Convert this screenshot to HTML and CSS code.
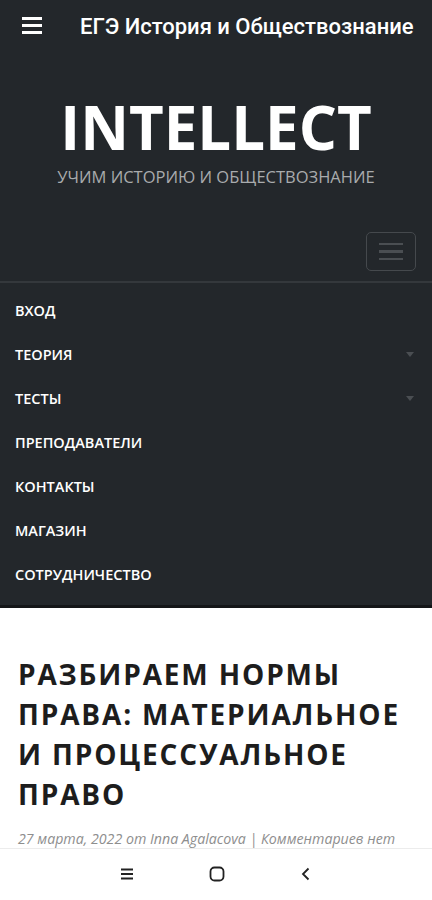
FILE: index.html
```html
<!DOCTYPE html>
<html lang="ru">
<head>
<meta charset="utf-8">
<title>ЕГЭ История и Обществознание</title>
<link rel="stylesheet" href="styles.css">
</head>
<body>
<div class="screen">
  <header class="appbar">
    <svg class="appbar-menu" width="24" height="24" viewBox="0 0 24 24"><path d="M2 4.5h20M2 11.5h20M2 18.5h20" stroke="#fff" stroke-width="3" fill="none"/></svg>
    <div class="appbar-title">ЕГЭ История и Обществознание</div>
  </header>
  <section class="site-header">
    <div class="brand">
      <div class="brand-name">INTELLECT</div>
      <div class="brand-tag">УЧИМ ИСТОРИЮ И ОБЩЕСТВОЗНАНИЕ</div>
    </div>
    <div class="toggle-row">
      <div class="toggle">
        <span class="bar"></span><span class="bar"></span><span class="bar"></span>
      </div>
    </div>
    <nav class="menu">
      <div class="menu-item">ВХОД</div>
      <div class="menu-item">ТЕОРИЯ<span class="caret"></span></div>
      <div class="menu-item">ТЕСТЫ<span class="caret"></span></div>
      <div class="menu-item">ПРЕПОДАВАТЕЛИ</div>
      <div class="menu-item">КОНТАКТЫ</div>
      <div class="menu-item">МАГАЗИН</div>
      <div class="menu-item">СОТРУДНИЧЕСТВО</div>
    </nav>
  </section>
  <main class="content">
    <h1 class="post-title">РАЗБИРАЕМ НОРМЫ ПРАВА: МАТЕРИАЛЬНОЕ И ПРОЦЕССУАЛЬНОЕ ПРАВО</h1>
    <div class="post-meta">27 марта, 2022 от Inna Agalacova | Комментариев нет</div>
  </main>
  <footer class="navbar">
    <svg width="14" height="14" viewBox="0 0 14 14"><path d="M1 2.5h12M1 7h12M1 11.5h12" stroke="#222" stroke-width="1.8" fill="none"/></svg>
    <svg width="16" height="16" viewBox="0 0 16 16"><rect x="1.5" y="1.5" width="13" height="13" rx="4" stroke="#222" stroke-width="1.8" fill="none"/></svg>
    <svg width="12" height="14" viewBox="0 0 12 14"><path d="M8.5 1.5L3 7l5.5 5.5" stroke="#222" stroke-width="1.8" fill="none"/></svg>
  </footer>
</div>
</body>
</html>
```

FILE: styles.css
```css
* { box-sizing: border-box; }
html, body { margin: 0; padding: 0; }
body {
  width: 432px;
  height: 900px;
  overflow: hidden;
  background: #fff;
  font-family: "Open Sans", "Noto Sans", sans-serif;
}
.screen {
  display: flex;
  flex-direction: column;
  height: 900px;
}
.appbar {
  height: 52px;
  background: #23272b;
  display: flex;
  align-items: center;
  padding-left: 20px;
  flex: none;
}
.appbar-title {
  margin-left: 36px;
  font-family: Roboto, "Noto Sans", sans-serif;
  font-weight: 500;
  font-size: 22px;
  color: #fff;
  white-space: nowrap;
}
.site-header {
  background: #23272b;
  border-bottom: 3px solid #141618;
  flex: none;
}
.brand {
  text-align: center;
  padding-top: 37px;
}
.brand-name {
  font-size: 60px;
  font-weight: 700;
  line-height: 76px;
  color: #fff;
}
.brand-tag {
  font-size: 16.5px;
  font-weight: 400;
  color: #a9abad;
  line-height: 24px;
}
.toggle-row {
  display: flex;
  justify-content: flex-end;
  padding: 43px 16px 10px 0;
  border-bottom: 2px solid #34383c;
}
.toggle {
  width: 50px;
  height: 39px;
  border: 1.5px solid #45494d;
  border-radius: 5px;
  display: flex;
  flex-direction: column;
  justify-content: center;
  align-items: center;
  gap: 5px;
}
.bar {
  display: block;
  width: 24px;
  height: 2.5px;
  background: #4a4e52;
}
.menu {
  padding: 5px 0 9px;
}
.menu-item {
  height: 44px;
  display: flex;
  align-items: center;
  justify-content: space-between;
  padding: 0 16px 0 15px;
  color: #fff;
  font-size: 14.5px;
  font-weight: 600;
}
.caret {
  width: 0;
  height: 0;
  border-left: 4px solid transparent;
  border-right: 4px solid transparent;
  border-top: 5px solid #4a4e52;
  margin-right: 2px;
}
.content {
  flex: 1;
  padding: 46px 18px 0;
  overflow: hidden;
}
.post-title {
  margin: 0;
  font-size: 28px;
  font-weight: 700;
  line-height: 40px;
  letter-spacing: 1.85px;
  color: #1d1d1d;
}
.post-meta {
  margin-top: 15px;
  font-size: 14.2px;
  font-style: italic;
  color: #8e8e8e;
  white-space: nowrap;
}
.navbar {
  height: 52px;
  flex: none;
  background: #fff;
  border-top: 1px solid #ececec;
  display: flex;
  justify-content: center;
  align-items: center;
  gap: 75px;
  padding-bottom: 2px;
}
```
